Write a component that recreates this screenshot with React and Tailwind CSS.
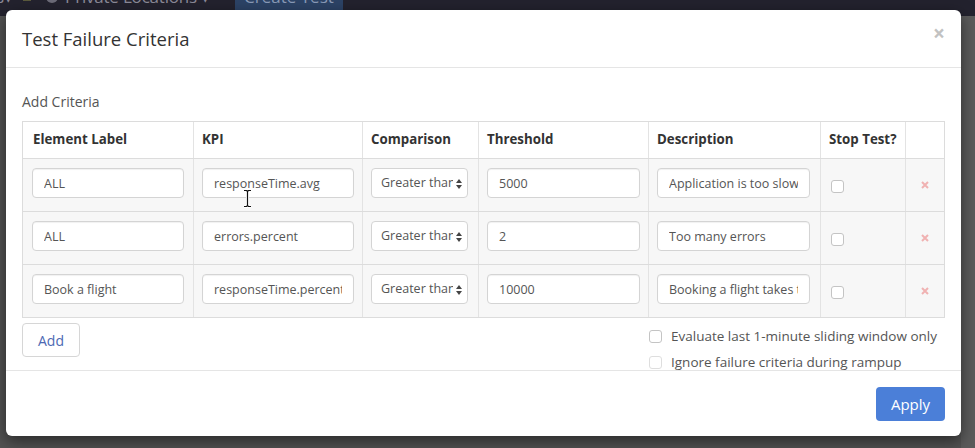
import React from 'react';

const rows = [
  { label: 'ALL', kpi: 'responseTime.avg', threshold: '5000', description: 'Application is too slow', cursor: true },
  { label: 'ALL', kpi: 'errors.percent', threshold: '2', description: 'Too many errors' },
  { label: 'Book a flight', kpi: 'responseTime.percentile', threshold: '10000', description: 'Booking a flight takes too long' },
];

const TextBox = ({ value }) => (
  <input
    readOnly
    value={value}
    className="w-full h-[30px] px-[11px] bg-white border border-[#d4d4d4] rounded-[4px] text-[12.5px] text-[#555] shadow-[inset_0_1px_1px_rgba(0,0,0,0.06)] outline-none"
  />
);

const SelectBox = () => (
  <div className="relative w-full h-[30px] bg-white border border-[#d4d4d4] rounded-[4px] text-[12.5px] text-[#555] overflow-hidden flex items-center pl-[9px] pr-[14px]">
    <span className="whitespace-nowrap overflow-hidden">Greater than</span>
    <svg className="absolute right-[5px] top-[10px]" width="6" height="10" viewBox="0 0 6 10">
      <path d="M3 0 L6 4 L0 4 Z" fill="#444" />
      <path d="M3 10 L6 6 L0 6 Z" fill="#444" />
    </svg>
  </div>
);

const Check = ({ className = '' }) => (
  <span className={`block shrink-0 w-[13px] h-[13px] bg-white border border-[#c4c4c4] rounded-[3px] ${className}`} />
);

const IBeam = () => (
  <svg className="absolute left-[49px] top-[30px]" width="9" height="19" viewBox="0 0 9 19">
    <path d="M1 1.5 H3.5 L4.5 2.5 L5.5 1.5 H8 M4.5 2.5 V16.5 M1 17.5 H3.5 L4.5 16.5 L5.5 17.5 H8" stroke="#fff" strokeWidth="3" fill="none" />
    <path d="M1 1.5 H3.5 L4.5 2.5 L5.5 1.5 H8 M4.5 2.5 V16.5 M1 17.5 H3.5 L4.5 16.5 L5.5 17.5 H8" stroke="#111" strokeWidth="1.2" fill="none" />
  </svg>
);

const App = () => {
  return (
    <div className="relative w-[975px] h-[448px] overflow-hidden bg-[#525252] font-['Open_Sans',sans-serif]">
      {/* page behind the modal */}
      <div className="h-[16px] bg-[#23222e] overflow-hidden">
        <div className="flex items-center h-[28px] -mt-[17px] text-[17px] text-[#8b8a98] whitespace-nowrap">
          <span className="-ml-[4px]">s▾</span>
          <span className="ml-[10px] w-[8px] h-[8px] bg-[#5b5a3c]" />
          <span className="ml-[15px] w-[12px] h-[12px] rounded-full bg-[#6c6b78]" />
          <span className="ml-[7px] tracking-[-0.2px]">Private Locations ▾</span>
          <span className="ml-[25px] w-[108px] h-[28px] bg-[#2c4366] text-[#8a9bb8] flex items-center justify-center">Create Test</span>
        </div>
      </div>
      <div className="absolute right-0 top-[16px] w-[14px] h-[432px] bg-[#5b5b5b]" />

      {/* modal */}
      <div className="absolute left-[6px] top-[10px] w-[955px] h-[426px] bg-white rounded-[6px] shadow-[0_5px_15px_rgba(0,0,0,0.5)] flex flex-col">
        <div className="h-[58px] flex items-center justify-between px-[16px] border-b border-[#e5e5e5]">
          <h4 className="text-[18.5px] text-[#333]">Test Failure Criteria</h4>
          <span className="-mt-[10px] text-[21px] font-bold leading-none text-[#c2c2c2]">×</span>
        </div>

        <div className="h-[302px] px-[16px] pt-[24px]">
          <div className="text-[14px] leading-[20px] text-[#555]">Add Criteria</div>

          <div className="mt-[9px] w-[923px] border border-[#dcdcdc]">
            <div className="flex h-[36px] bg-white text-[13.3px] font-bold text-[#333]">
              <div className="w-[170px] px-[10px] flex items-center">Element Label</div>
              <div className="w-[169px] px-[8px] flex items-center border-l border-[#e3e3e3]">KPI</div>
              <div className="w-[116px] px-[8px] flex items-center border-l border-[#e3e3e3]">Comparison</div>
              <div className="w-[170px] px-[8px] flex items-center border-l border-[#e3e3e3]">Threshold</div>
              <div className="w-[172px] px-[8px] flex items-center border-l border-[#e3e3e3]">Description</div>
              <div className="w-[85px] px-[8px] flex items-center border-l border-[#e3e3e3]">Stop Test?</div>
              <div className="flex-1 border-l border-[#e3e3e3]" />
            </div>

            {rows.map((row, i) => (
              <div key={i} className="flex h-[53px] bg-[#f7f7f7] border-t border-[#dcdcdc]">
                <div className="w-[170px] pl-[9px] pr-[9px] pt-[9px]">
                  <TextBox value={row.label} />
                </div>
                <div className="relative w-[169px] px-[8px] pt-[9px] border-l border-[#e3e3e3]">
                  <TextBox value={row.kpi} />
                  {row.cursor && <IBeam />}
                </div>
                <div className="w-[116px] pl-[8px] pr-[10px] pt-[9px] border-l border-[#e3e3e3]">
                  <SelectBox />
                </div>
                <div className="w-[170px] px-[8px] pt-[9px] border-l border-[#e3e3e3]">
                  <TextBox value={row.threshold} />
                </div>
                <div className="w-[172px] pl-[8px] pr-[10px] pt-[9px] border-l border-[#e3e3e3]">
                  <TextBox value={row.description} />
                </div>
                <div className="w-[85px] pl-[10px] pt-[21px] border-l border-[#e3e3e3]">
                  <Check />
                </div>
                <div className="flex-1 flex items-center justify-center border-l border-[#e3e3e3]">
                  <svg width="8" height="8" viewBox="0 0 8 8">
                    <path d="M1 1 L7 7 M7 1 L1 7" stroke="#f0b2b2" strokeWidth="2" />
                  </svg>
                </div>
              </div>
            ))}
          </div>

          <div className="mt-[5px] w-[923px] flex justify-between">
            <button className="w-[58px] h-[34px] border border-[#d6d6d6] rounded-[4px] bg-white text-[14px] text-[#4d68b3]">
              Add
            </button>
            <div className="w-[296px] text-[13.5px] text-[#555]">
              <label className="h-[26px] flex items-center">
                <Check className="mt-[1px]" />
                <span className="ml-[9px] whitespace-nowrap">Evaluate last 1-minute sliding window only</span>
              </label>
              <label className="h-[26px] flex items-center">
                <Check className="mt-[1px] border-[#dedede]" />
                <span className="ml-[9px] whitespace-nowrap">Ignore failure criteria during rampup</span>
              </label>
            </div>
          </div>
        </div>

        <div className="flex-1 border-t border-[#e5e5e5] flex justify-end items-start px-[16px] pt-[16px]">
          <button className="w-[69px] h-[34px] rounded-[4px] bg-[#4b7fd8] text-[15px] text-white">
            Apply
          </button>
        </div>
      </div>
    </div>
  );
};

export default App;
